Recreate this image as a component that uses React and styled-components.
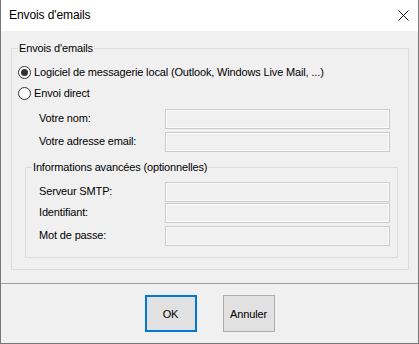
import React from 'react'
import styled, { createGlobalStyle } from 'styled-components'

const GlobalStyle = createGlobalStyle`
  html, body {
    margin: 0;
    padding: 0;
    background: #ffffff;
  }
  * { box-sizing: border-box; }
`

const Window = styled.div`
  width: 419px;
  height: 344px;
  display: flex;
  flex-direction: column;
  border: 1px solid #777777;
  border-top: none;
  background: #f0f0f0;
  font-family: "Liberation Sans", Arial, sans-serif;
  font-size: 11px;
  letter-spacing: -0.15px;
  color: #000000;
`

const TitleBar = styled.div`
  height: 31px;
  flex: none;
  display: flex;
  align-items: center;
  justify-content: space-between;
  padding: 0 9px 0 8px;
  background: #ffffff;
`

const Title = styled.span`
  font-size: 12px;
  letter-spacing: -0.1px;
  line-height: 15px;
  padding-bottom: 1px;
`

const CloseIcon = styled.svg`
  width: 11px;
  height: 11px;
  margin-top: -1px;
`

const Body = styled.div`
  flex: none;
  height: 252px;
  padding: 17px 9px 13px 10px;
`

const Group = styled.div`
  display: flex;
  flex-direction: column;
  border: 1px solid #dcdcdc;
  padding: 0 ${p => p.$right}px 11px 6px;
  margin-top: ${p => p.$top || 0}px;
  margin-left: ${p => p.$left || 0}px;
`

const Legend = styled.div`
  align-self: flex-start;
  margin-top: -8px;
  padding: 0 1px;
  line-height: 15px;
  background: #f0f0f0;
`

const RadioRow = styled.label`
  display: flex;
  align-items: center;
  height: 20px;
  margin-top: ${p => p.$top}px;
  gap: 3px;
`

const RadioDot = styled.span`
  width: 13px;
  height: 13px;
  flex: none;
  border-radius: 50%;
  border: 1px solid #333333;
  background: #ffffff;
  display: flex;
  align-items: center;
  justify-content: center;

  &::after {
    content: '';
    width: 7px;
    height: 7px;
    border-radius: 50%;
    background: ${p => (p.$checked ? '#333333' : 'transparent')};
  }
`

const FieldRow = styled.div`
  display: flex;
  align-items: center;
  height: 20px;
  margin: ${p => p.$top}px ${p => p.$right}px 0 ${p => p.$left}px;
`

const Label = styled.span`
  flex: 1;
  line-height: 15px;
  padding-bottom: 1px;
`

const Input = styled.div`
  width: 225px;
  height: 20px;
  flex: none;
  border: 1px solid #cacaca;
  box-shadow: inset 0 0 0 1px #fbfbfb;
  background: #f0f0f0;
`

const Separator = styled.div`
  height: 1px;
  flex: none;
  background: #a0a0a0;
`

const Footer = styled.div`
  flex: 1;
  display: flex;
  justify-content: center;
  align-items: flex-start;
  gap: 26px;
  padding-top: 11px;
`

const Button = styled.button`
  width: 52px;
  height: 37px;
  padding: 0;
  font-family: inherit;
  font-size: 11px;
  letter-spacing: -0.15px;
  color: #000000;
  background: #e1e1e1;
  border: ${p => (p.$primary ? '2px solid #0078d7' : '1px solid #adadad')};
  border-radius: 0;
`

function Field({ label, top, right, left }) {
  return (
    <FieldRow $top={top} $right={right} $left={left}>
      <Label>{label}</Label>
      <Input />
    </FieldRow>
  )
}

export default function App() {
  return (
    <>
      <GlobalStyle />
      <Window>
        <TitleBar>
          <Title>Envois d'emails</Title>
          <CloseIcon viewBox="0 0 11 11">
            <path d="M0.5 0.5 L10.5 10.5 M10.5 0.5 L0.5 10.5" stroke="#111" strokeWidth="1" fill="none" />
          </CloseIcon>
        </TitleBar>
        <Body>
          <Group $right={10}>
            <Legend>Envois d'emails</Legend>
            <RadioRow $top={6}>
              <RadioDot $checked />
              Logiciel de messagerie local (Outlook, Windows Live Mail, ...)
            </RadioRow>
            <RadioRow $top={1}>
              <RadioDot />
              Envoi direct
            </RadioRow>
            <Field label="Votre nom:" top={6} right={8} left={21} />
            <Field label="Votre adresse email:" top={3} right={8} left={21} />
            <Group $right={7} $top={15} $left={7}>
              <Legend>Informations avancées (optionnelles)</Legend>
              <Field label="Serveur SMTP:" top={7} right={0} left={7} />
              <Field label="Identifiant:" top={1} right={0} left={7} />
              <Field label="Mot de passe:" top={3} right={0} left={7} />
            </Group>
          </Group>
        </Body>
        <Separator />
        <Footer>
          <Button $primary>OK</Button>
          <Button>Annuler</Button>
        </Footer>
      </Window>
    </>
  )
}
